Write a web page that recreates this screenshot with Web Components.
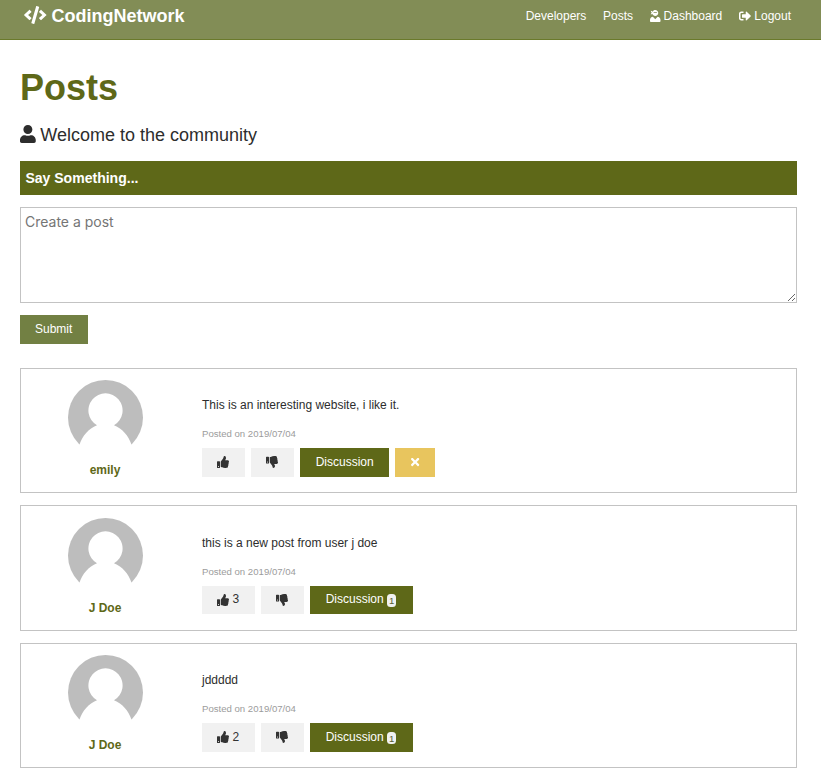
<!DOCTYPE html>
<html lang="en">
<head>
<meta charset="utf-8">
<title>CodingNetwork</title>
<style>
  :root { --primary: #5e6818; --nav: #828d56; --dark: #2d2d2d; --light: #f1f1f1; --line: #c3c3c3; }
  body { margin: 0; height: 768px; overflow: hidden; background: #fff; color: var(--dark);
         font: 12px/19.2px "Liberation Sans", Arial, sans-serif; }
</style>
</head>
<body>
<network-app></network-app>
<script>
const ICONS = {
  code: [640, 'M278.9 511.5l-61-17.7c-6.4-1.8-10-8.5-8.2-14.9L346.2 8.7c1.8-6.4 8.5-10 14.9-8.2l61 17.7c6.4 1.8 10 8.5 8.2 14.9L293.8 503.3c-1.9 6.4-8.5 10.1-14.9 8.2zm-114-112.2l43.5-46.4c4.6-4.9 4.3-12.7-.8-17.2L117 256l90.6-79.7c5.1-4.5 5.5-12.3.8-17.2l-43.5-46.4c-4.5-4.8-12.1-5.1-17-.5L3.8 247.2c-5.1 4.7-5.1 12.8 0 17.5l144.1 135.1c4.9 4.6 12.5 4.4 17-.5zm327.2.6l144.1-135.1c5.1-4.7 5.1-12.8 0-17.5L492.1 112.1c-4.8-4.5-12.4-4.3-17 .5L431.6 159c-4.6 4.9-4.3 12.7.8 17.2L523 256l-90.6 79.7c-5.1 4.5-5.5 12.3-.8 17.2l43.5 46.4c4.5 4.9 12.1 5.1 17 .6z'],
  user: [448, 'M224 256c70.7 0 128-57.3 128-128S294.7 0 224 0 96 57.3 96 128s57.3 128 128 128zm89.6 32h-16.7c-22.2 10.2-46.9 16-72.9 16s-50.6-5.8-72.9-16h-16.7C60.2 288 0 348.2 0 422.4V464c0 26.5 21.5 48 48 48h352c26.5 0 48-21.5 48-48v-41.6c0-74.2-60.2-134.4-134.4-134.4z'],
  ninja: [448, 'M325.4 289.2L224 390.6 122.6 289.2C54 295.3 0 352.2 0 422.4V464c0 26.5 21.5 48 48 48h352c26.5 0 48-21.5 48-48v-41.6c0-70.2-54-127.1-122.6-133.2zM32 192c27.3 0 51.8-11.5 69.2-29.7 15.1 53.9 64 93.7 122.8 93.7 70.7 0 128-57.3 128-128S294.7 0 224 0c-50.4 0-93.6 29.4-114.5 71.8C92.1 47.8 64 32 32 32c0 33.4 17.1 62.8 43.1 80-26 17.2-43.1 46.6-43.1 80zm144-96h96c17.7 0 32 14.3 32 32H144c0-17.7 14.3-32 32-32z'],
  logout: [512, 'M497 273L329 441c-15 15-41 4.5-41-17v-96H152c-13.3 0-24-10.7-24-24v-96c0-13.3 10.7-24 24-24h136V88c0-21.4 25.9-32 41-17l168 168c9.3 9.4 9.3 24.6 0 34zM192 436v-40c0-6.6-5.4-12-12-12H96c-17.7 0-32-14.3-32-32V160c0-17.7 14.3-32 32-32h84c6.6 0 12-5.4 12-12V76c0-6.6-5.4-12-12-12H96c-53 0-96 43-96 96v192c0 53 43 96 96 96h84c6.6 0 12-5.4 12-12z'],
  up: [512, 'M104 224H24c-13.255 0-24 10.745-24 24v240c0 13.255 10.745 24 24 24h80c13.255 0 24-10.745 24-24V248c0-13.255-10.745-24-24-24zM64 472c-13.255 0-24-10.745-24-24s10.745-24 24-24 24 10.745 24 24-10.745 24-24 24zM384 81.452c0 42.416-25.97 66.208-33.277 94.548h101.723c33.397 0 59.397 27.746 59.553 58.098.084 17.938-7.546 37.249-19.439 49.197l-.11.11c9.836 23.337 8.237 56.037-9.308 79.469 8.681 25.895-.069 57.704-16.382 74.757 4.298 17.598 2.244 32.575-6.148 44.632C440.202 511.587 389.616 512 346.839 512l-2.845-.001c-48.287-.017-87.806-17.598-119.56-31.725-15.957-7.099-36.821-15.887-52.651-16.178-6.54-.12-11.783-5.457-11.783-11.998v-213.77c0-3.2 1.282-6.271 3.558-8.521 39.614-39.144 56.648-80.587 89.117-113.111 14.804-14.832 20.188-37.236 25.393-58.902C282.515 39.293 291.817 0 312 0c24 0 72 8 72 81.452z'],
  down: [512, 'M0 56v240c0 13.255 10.745 24 24 24h80c13.255 0 24-10.745 24-24V56c0-13.255-10.745-24-24-24H24C10.745 32 0 42.745 0 56zm40 200c0-13.255 10.745-24 24-24s24 10.745 24 24-10.745 24-24 24-24-10.745-24-24zm272 256c-20.183 0-29.485-39.293-33.931-57.795-5.206-21.666-10.589-44.07-25.393-58.902-32.469-32.524-49.503-73.967-89.117-113.111a11.98 11.98 0 0 1-3.558-8.521V59.901c0-6.541 5.243-11.878 11.783-11.998 15.831-.29 36.694-9.079 52.651-16.178C256.189 17.598 295.709.017 343.995 0h2.844c42.777 0 93.363.413 113.774 29.737 8.392 12.057 10.446 27.034 6.148 44.632 16.312 17.053 25.063 48.863 16.382 74.757 17.544 23.432 19.143 56.132 9.308 79.469l.11.11c11.893 11.949 19.523 31.259 19.439 49.197-.156 30.352-26.157 58.098-59.553 58.098H350.723C358.03 364.34 384 388.132 384 430.548 384 504 336 512 312 512z'],
  times: [352, 'M242.72 256l100.07-100.07c12.28-12.28 12.28-32.19 0-44.48l-22.24-22.24c-12.28-12.28-32.19-12.28-44.48 0L176 189.28 75.93 89.21c-12.28-12.28-32.19-12.28-44.48 0L9.21 111.45c-12.28 12.28-12.28 32.19 0 44.48L109.28 256 9.21 356.07c-12.28 12.28-12.28 32.19 0 44.48l22.24 22.24c12.28 12.28 32.2 12.28 44.48 0L176 322.72l100.07 100.07c12.28 12.28 32.2 12.28 44.48 0l22.24-22.24c12.28-12.28 12.28-32.19 0-44.48L242.72 256z']
};

function define(name, render) {
  customElements.define(name, class extends HTMLElement {
    connectedCallback() {
      if (this.shadowRoot) return;
      this.attachShadow({ mode: 'open' }).innerHTML = render(this);
    }
  });
}

define('fa-icon', el => {
  const [w, d] = ICONS[el.getAttribute('name')];
  return `<style>:host{display:inline-block;height:1em;width:${w / 512}em;line-height:1;vertical-align:var(--icon-shift,-.125em);white-space:normal}
    svg{display:block;width:100%;height:100%;fill:currentColor;overflow:visible}</style>
    <svg viewBox="0 0 ${w} 512"><path d="${d}"/></svg>`;
});

define('nav-bar', () => `<style>
  :host{display:flex;justify-content:space-between;box-sizing:border-box;height:40px;padding:0 30px 0 24px;
    background:var(--nav);border-bottom:1px solid #6a7a2b;color:#fff}
  .brand{font-size:18px;font-weight:bold;line-height:32px}
  nav{display:flex;gap:16.7px;line-height:32px}
  </style>
  <div class="brand"><fa-icon name="code"></fa-icon> CodingNetwork</div>
  <nav><span>Developers</span><span>Posts</span><span><fa-icon name="ninja"></fa-icon> Dashboard</span><span><fa-icon name="logout"></fa-icon> Logout</span></nav>`);

define('flat-button', () => `<style>
  :host{--icon-shift:-.18em;display:inline-block;box-sizing:border-box;height:28.8px;padding:4.8px 16.1px 4.8px 15.1px;line-height:19.2px;
    background:var(--light);color:#333;white-space:pre}
  :host([kind=primary]){background:var(--primary);color:#fff;padding:4.8px 15.3px}
  :host([kind=submit]){background:#728043;color:#fff;padding:4.8px 15.5px 4.8px 15px}
  :host([kind=danger]){background:#e8c55e;color:#fff;padding:4.8px 15.8px}
  </style><slot></slot>`);

define('count-badge', () => `<style>
  :host{display:inline-block;width:9.4px;height:12.6px;line-height:13px;border-radius:3.5px;background:var(--light);
    color:#5a6036;font-size:9.6px;text-align:center;vertical-align:-2px;position:relative;top:-1px;margin-right:1px;white-space:normal}
  </style><slot></slot>`);

define('user-avatar', () => `<style>:host{display:block;width:75px;height:75px}svg{display:block}</style>
  <svg width="75" height="75" viewBox="0 0 75 75"><circle cx="37.5" cy="37.5" r="37.5" fill="#bdbdbd"/>
  <path fill="#fff" d="M11.3 65C14.5 56 20.5 48.500 29 45.300A17.100 17.100 0 1 1 46 45.300C54.500 48.500 60.500 56 63.700 65V76H11.300Z"/></svg>`);

define('post-form', () => `<style>
  :host{display:block}
  h3{margin:0;background:var(--primary);color:#fff;font-size:14.04px;line-height:34px;height:34px;padding-left:5.4px}
  textarea{display:block;box-sizing:border-box;width:100%;height:96px;margin:12px 0;padding:4px;border:1px solid var(--line);
    border-radius:0;font:14px/20px Inter,"Liberation Sans",sans-serif;outline:0;resize:vertical;background:#fff}
  textarea::placeholder{color:#757575;opacity:1}
  .submit{display:flex}
  </style>
  <h3>Say Something...</h3><textarea placeholder="Create a post"></textarea>
  <div class="submit"><flat-button kind="submit">Submit</flat-button></div>`);

define('post-card', el => {
  const likes = el.getAttribute('likes'), comments = el.getAttribute('comments');
  return `<style>
  :host{display:grid;grid-template-columns:145px 1fr;column-gap:24px;box-sizing:border-box;height:125.4px;
    padding:11.5px 12px 0;border:1px solid var(--line);background:#fff}
  .who{display:flex;flex-direction:column;align-items:center}
  h4{margin:5.6px 0 0;color:var(--primary);font-size:12px;line-height:19.2px;padding-right:1px}
  p{margin:0}
  .text{padding-top:15.7px}
  .date{font-size:9.6px;line-height:15px;color:#9c9c9c;margin:11.1px 0 6.6px}
  .actions{display:flex;gap:6px}
  </style>
  <div class="who"><user-avatar></user-avatar><h4>${el.getAttribute('author')}</h4></div>
  <div><p class="text"><slot></slot></p><p class="date">Posted on ${el.getAttribute('date')}</p>
  <div class="actions"><flat-button><fa-icon name="up"></fa-icon>${likes ? ' ' + likes : ''}</flat-button><flat-button><fa-icon name="down"></fa-icon></flat-button><flat-button kind="primary">Discussion${comments ? ` <count-badge>${comments}</count-badge>` : ''}</flat-button>${el.hasAttribute('own') ? '<flat-button kind="danger"><fa-icon name="times"></fa-icon></flat-button>' : ''}</div></div>`;
});

define('network-app', () => `<style>
  :host{display:block}
  main{padding:26px 24px 0 20px}
  h1{margin:0;color:var(--primary);font-size:36px;line-height:43px}
  .lead{margin:14px 0 14px -.4px;font-size:18px;line-height:24px}
  .posts{display:flex;flex-direction:column;gap:12.1px;padding-top:24.2px}
  </style>
  <nav-bar></nav-bar>
  <main><h1>Posts</h1><p class="lead"><fa-icon name="user"></fa-icon> Welcome to the community</p>
  <post-form></post-form>
  <div class="posts">
    <post-card author="emily" date="2019/07/04" own>This is an interesting website, i like it.</post-card>
    <post-card author="J Doe" date="2019/07/04" likes="3" comments="1">this is a new post from user j doe</post-card>
    <post-card author="J Doe" date="2019/07/04" likes="2" comments="1">jddddd</post-card>
  </div></main>`);
</script>
</body>
</html>
